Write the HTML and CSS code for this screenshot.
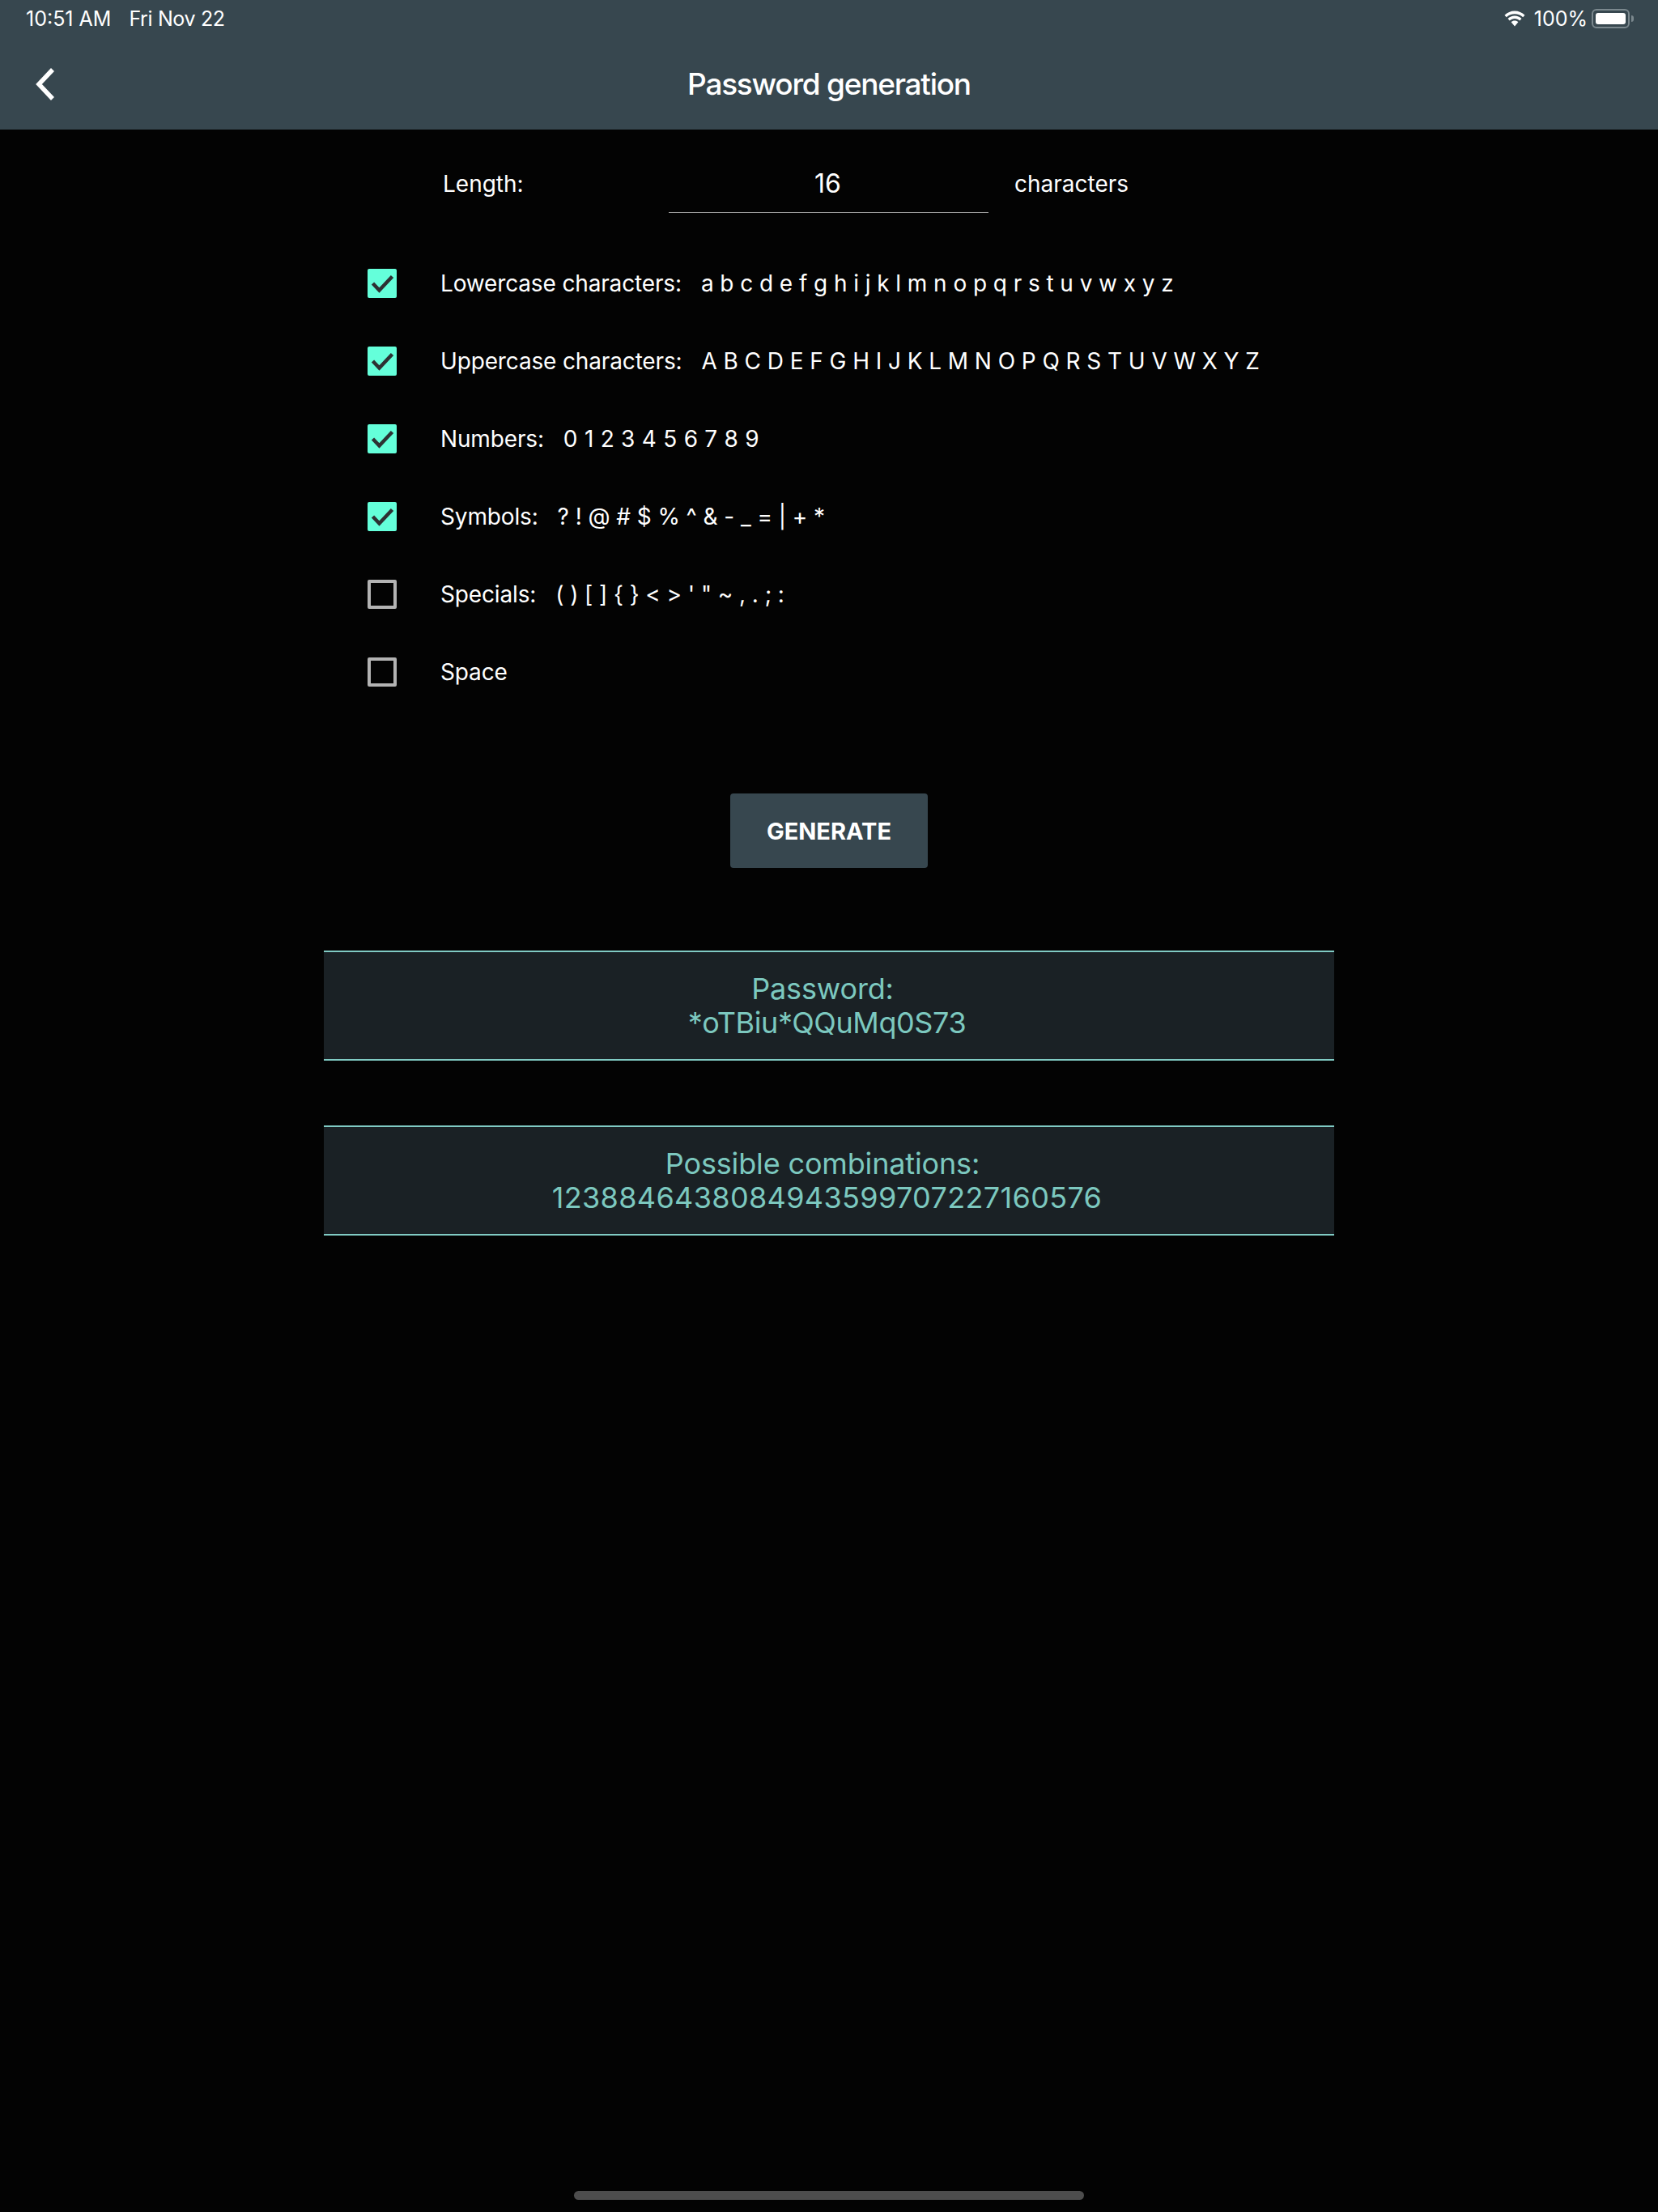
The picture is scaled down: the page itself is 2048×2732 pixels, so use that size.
FILE: index.html
```html
<!DOCTYPE html>
<html lang="en">
<head>
    <meta charset="UTF-8">
    <meta name="viewport" content="width=device-width, initial-scale=1.0">
    <title>Password generation</title>
    <link rel="stylesheet" href="styles.css">
</head>
<body>
    <div class="page">
        <header class="app-header">
            <div class="status-bar">
                <div class="status-left">
                    <span>10:51 AM</span>
                    <span class="status-date">Fri Nov 22</span>
                </div>
                <div class="status-right">
                    <svg class="wifi-icon" viewBox="0 0 28 20" width="28" height="20">
                        <path d="M14 4.200c3.900 0 7.500 1.500 10.200 4l2.300-2.400C23.200 2.600 18.800.6 14 .6S4.800 2.600 1.500 5.800l2.300 2.400c2.700-2.500 6.300-4 10.200-4z" fill="#fff"/>
                        <path d="M14 10c2.400 0 4.500.9 6.200 2.400l2.300-2.400C20.300 7.900 17.300 6.600 14 6.600S7.700 7.900 5.500 10l2.300 2.400C9.500 10.900 11.600 10 14 10z" fill="#fff"/>
                        <path d="M14 12.600c-1.700 0-3.200.6-4.400 1.700L14 19.600l4.400-5.300c-1.200-1.100-2.700-1.700-4.400-1.700z" fill="#fff"/>
                    </svg>
                    <span class="status-level">100%</span>
                    <div class="battery">
                        <div class="battery-body"><div class="battery-level"></div></div>
                        <div class="battery-nub"></div>
                    </div>
                </div>
            </div>
            <div class="title-bar">
                <svg class="back-icon" viewBox="0 0 26 42" width="26" height="42">
                    <path d="M22 3L5 21l17 18" fill="none" stroke="#fff" stroke-width="5.500"/>
                </svg>
                <h1>Password generation</h1>
            </div>
        </header>

        <main class="content">
            <div class="length-row">
                <span class="length-label">Length:</span>
                <div class="length-input">16</div>
                <span>characters</span>
            </div>

            <div class="options">
                <div class="option">
                    <span class="checkbox checked"><svg viewBox="0 0 36 36" width="36" height="36"><path d="M6.500 18l8 8.500L30.500 9.500" fill="none" stroke="#2d3133" stroke-width="4.500"/></svg></span>
                    <span class="option-label">Lowercase characters:</span>
                    <span class="option-chars">a b c d e f g h i j k l m n o p q r s t u v w x y z</span>
                </div>
                <div class="option">
                    <span class="checkbox checked"><svg viewBox="0 0 36 36" width="36" height="36"><path d="M6.500 18l8 8.500L30.500 9.500" fill="none" stroke="#2d3133" stroke-width="4.500"/></svg></span>
                    <span class="option-label">Uppercase characters:</span>
                    <span class="option-chars">A B C D E F G H I J K L M N O P Q R S T U V W X Y Z</span>
                </div>
                <div class="option">
                    <span class="checkbox checked"><svg viewBox="0 0 36 36" width="36" height="36"><path d="M6.500 18l8 8.500L30.500 9.500" fill="none" stroke="#2d3133" stroke-width="4.500"/></svg></span>
                    <span class="option-label">Numbers:</span>
                    <span class="option-chars option-digits">0 1 2 3 4 5 6 7 8 9</span>
                </div>
                <div class="option">
                    <span class="checkbox checked"><svg viewBox="0 0 36 36" width="36" height="36"><path d="M6.500 18l8 8.500L30.500 9.500" fill="none" stroke="#2d3133" stroke-width="4.500"/></svg></span>
                    <span class="option-label">Symbols:</span>
                    <span class="option-chars">? ! @ # $ % ^ &amp; - _ = | + *</span>
                </div>
                <div class="option">
                    <span class="checkbox"></span>
                    <span class="option-label">Specials:</span>
                    <span class="option-chars">( ) [ ] { } &lt; &gt; ' " ~ , . ; :</span>
                </div>
                <div class="option">
                    <span class="checkbox"></span>
                    <span class="option-label">Space</span>
                </div>
            </div>

            <button class="generate-btn">GENERATE</button>

            <div class="result result-password">
                <div class="result-label">Password:</div>
                <div class="result-value">*oTBiu*QQuMq0S73</div>
            </div>
            <div class="result result-combos">
                <div class="result-label">Possible combinations:</div>
                <div class="result-value">1238846438084943599707227160576</div>
            </div>
        </main>

        <div class="home-bar"></div>
    </div>
</body>
</html>
```

FILE: styles.css
```css
* {
    box-sizing: border-box;
}

body {
    margin: 0;
    background: #030303;
    color: #fff;
    font-family: Inter, "Noto Sans", sans-serif;
}

.page {
    height: 2732px;
    display: flex;
    flex-direction: column;
}

.app-header {
    height: 160px;
    background: #37474f;
    flex-shrink: 0;
}

.status-bar {
    height: 46px;
    padding: 0 30px 0 32px;
    display: flex;
    justify-content: space-between;
    align-items: center;
    font-size: 25px;
}

.status-left {
    display: flex;
    gap: 22px;
}

.status-date {
    letter-spacing: -0.35px;
}

.status-right {
    display: flex;
    align-items: center;
    gap: 10px;
}

.status-level {
    margin-right: -5px;
}

.battery {
    display: flex;
    align-items: center;
    gap: 2px;
}

.battery-body {
    width: 47px;
    height: 24px;
    padding: 3px;
    border: 2px solid #7b888e;
    border-radius: 6px;
}

.battery-level {
    height: 100%;
    background: #fff;
    border-radius: 3px;
}

.battery-nub {
    width: 3px;
    height: 8px;
    background: #7b888e;
    border-radius: 0 3px 3px 0;
}

.title-bar {
    height: 114px;
    position: relative;
    display: flex;
    align-items: center;
    justify-content: center;
}

.title-bar h1 {
    margin: 0;
    font-size: 37px;
    font-weight: 500;
    letter-spacing: -1.25px;
}

.back-icon {
    position: absolute;
    left: 43px;
    top: 37px;
}

.content {
    width: 1248px;
    margin: 0 auto;
    display: flex;
    flex-direction: column;
    font-size: 28px;
}

.length-row {
    height: 103px;
    margin-top: 15px;
    padding-left: 147px;
    display: flex;
    align-items: center;
    gap: 32px;
}

.length-label {
    width: 247px;
}

.length-input {
    width: 395px;
    height: 70px;
    margin-top: 3px;
    padding: 14px 2px 0 0;
    text-align: center;
    font-size: 32px;
    border-bottom: 1px solid #a0a0a0;
}

.options {
    margin-top: 54px;
    padding-left: 54px;
    display: flex;
    flex-direction: column;
    gap: 60px;
}

.option {
    height: 36px;
    display: flex;
    align-items: center;
    font-size: 28px;
    letter-spacing: -0.15px;
    white-space: nowrap;
}

.checkbox {
    width: 36px;
    height: 36px;
    margin-right: 54px;
    border: 4px solid #b3b3b3;
    border-radius: 2px;
    flex-shrink: 0;
}

.checkbox.checked {
    border: none;
    background: #64ffda;
}

.checkbox svg {
    display: block;
}

.option-chars {
    margin-left: 24px;
    letter-spacing: -0.07px;
}

.option-digits {
    letter-spacing: 0.25px;
}

.generate-btn {
    width: 244px;
    height: 92px;
    margin: 132px auto 0;
    border: none;
    border-radius: 4px;
    background: #37474f;
    color: #fff;
    font-family: inherit;
    font-size: 29px;
    font-weight: 700;
}

.result {
    height: 136px;
    display: flex;
    flex-direction: column;
    justify-content: center;
    text-align: center;
    font-size: 36px;
    line-height: 42px;
    color: #7cc8bf;
    background: #1a2125;
    border-top: 2px solid #80cbc4;
    border-bottom: 2px solid #80cbc4;
}

.result-label {
    padding-right: 16px;
    letter-spacing: -0.15px;
}

.result-value {
    padding-right: 5px;
}

.result-password {
    margin-top: 102px;
}

.result-password .result-value {
    letter-spacing: -0.4px;
}

.result-combos {
    margin-top: 80px;
}

.result-combos .result-value {
    letter-spacing: 0.35px;
}

.home-bar {
    width: 630px;
    height: 11px;
    margin: auto auto 15px;
    background: #4d4d4d;
    border-radius: 6px;
}
```
